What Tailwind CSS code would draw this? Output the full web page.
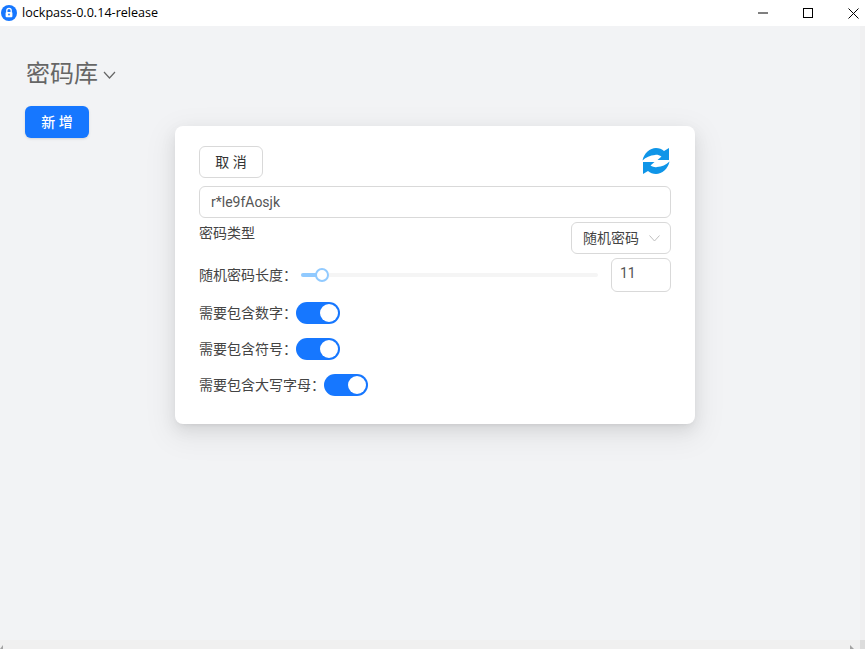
<!DOCTYPE html>
<html lang="zh-CN">
<head>
    <meta charset="UTF-8">
    <title>lockpass</title>
    <script src="https://cdn.jsdelivr.net/npm/@tailwindcss/browser@4"></script>
</head>
<body class="w-[865px] h-[649px] overflow-hidden bg-[#f2f3f5] font-['Roboto','Noto_Sans_CJK_SC',sans-serif] text-[#444]">
    <div class="relative flex flex-col h-[649px]">
        <!-- title bar -->
        <div class="flex items-center justify-between h-[26px] bg-white shrink-0">
            <div class="flex items-center">
                <svg class="ml-[1px] w-4 h-4" viewBox="0 0 16 16">
                    <circle cx="8" cy="8" r="8" fill="#1677ff"/>
                    <path d="M5.8 7V5.6a2.2 2.2 0 0 1 4.4 0V7" fill="none" stroke="#fff" stroke-width="1.3"/>
                    <rect x="4.6" y="7" width="6.8" height="5.2" rx="1" fill="#fff"/>
                    <circle cx="8" cy="9.5" r="0.9" fill="#1677ff"/>
                </svg>
                <span class="ml-[5px] text-[12.6px] text-black font-['Open_Sans',sans-serif]">lockpass-0.0.14-release</span>
            </div>
            <div class="flex items-center gap-[35px] pr-[6px]">
                <svg class="w-[10px] h-[10px]" viewBox="0 0 10 10"><path d="M0 5H10" stroke="#000"/></svg>
                <svg class="w-[10px] h-[10px]" viewBox="0 0 10 10"><rect x="0.5" y="0.5" width="9" height="9" fill="none" stroke="#000"/></svg>
                <svg class="w-[11px] h-[11px]" viewBox="0 0 11 11"><path d="M0.5 0.5L10.5 10.5M10.5 0.5L0.5 10.5" stroke="#000"/></svg>
            </div>
        </div>

        <!-- page -->
        <div class="flex flex-1">
            <div class="flex-1 pl-[25px] pt-[30px]">
                <div class="flex items-center h-[36px]">
                    <h1 class="ml-[1px] text-[24px] leading-[36px] font-normal text-[#666] font-['Liberation_Serif','Noto_Sans_CJK_SC',serif]">密码库</h1>
                    <svg class="ml-[5px] mt-[2px] w-[13px] h-[8px]" viewBox="0 0 13 8"><path d="M1 1L6.5 7L12 1" fill="none" stroke="#666" stroke-width="1.2"/></svg>
                </div>
                <button class="mt-[14px] w-[64px] h-[32px] rounded-[6px] bg-[#1677ff] text-white text-[14px] font-medium shadow-sm">新 增</button>
            </div>
            <div class="w-[5px] bg-[#f0f0f1]"></div>
        </div>

        <!-- bottom scrollbar -->
        <div class="flex h-[9px] shrink-0 bg-[#f0f0f0]">
            <svg class="w-[4px] h-[9px]" viewBox="0 0 4 9"><path d="M0 9L3 5V9Z" fill="#a3a3a3"/></svg>
            <div class="flex-1"></div>
            <svg class="w-[4px] h-[9px]" viewBox="0 0 4 9"><path d="M0 5L4 9H0Z" fill="#a3a3a3"/></svg>
            <div class="w-[6px]"></div>
            <div class="w-[5px] bg-[#dcdcdc]"></div>
        </div>

        <!-- modal -->
        <div class="absolute left-[175px] top-[126px] w-[520px] h-[298px] bg-white rounded-[8px] shadow-[0_6px_16px_0_rgba(0,0,0,0.08),0_3px_6px_-4px_rgba(0,0,0,0.12),0_9px_28px_8px_rgba(0,0,0,0.05)] px-[24px] pt-[20px]">
            <div class="flex items-center justify-between h-[32px]">
                <button class="w-[64px] h-[32px] rounded-[6px] border border-[#d9d9d9] bg-white text-[14px] text-[#333]">取 消</button>
                <svg class="w-[28px] h-[28px] mb-[3px] mr-[1px]" viewBox="0 0 28 28">
                    <path fill="#0f95e8" d="M0.5 13.5C2 6 8 1 14 1C17 1 20 2 22 4L27 1V13H15.5L19.5 9.5C17 8 15 7.5 13 8C8 8.5 4 10 0.5 13.5Z"/>
                    <path fill="#0f95e8" d="M27.5 14.5C26 22 20 27 14 27C11 27 8 26 6 24L1 27V15H12.5L8.5 18.5C11 20 13 20.5 15 20C20 19.5 24 18 27.5 14.5Z"/>
                </svg>
            </div>
            <input class="block mt-[8px] w-full h-[32px] rounded-[6px] border border-[#d9d9d9] px-[11px] text-[14px] text-[#555] outline-none" value="r*le9fAosjk">
            <div class="flex justify-between mt-[4px]">
                <span class="text-[14px] leading-[22px]">密码类型</span>
                <div class="flex items-center justify-between w-[100px] h-[32px] rounded-[6px] border border-[#d9d9d9] pl-[11px] pr-[10px]">
                    <span class="text-[14px]">随机密码</span>
                    <svg class="w-[11px] h-[7px]" viewBox="0 0 11 7"><path d="M0.5 0.5L5.5 6L10.5 0.5" fill="none" stroke="#bfbfbf"/></svg>
                </div>
            </div>
            <div class="flex items-center mt-[4px] h-[34px]">
                <span class="text-[14px] w-[102px] shrink-0 whitespace-nowrap">随机密码长度：</span>
                <div class="relative w-[297px] h-[4px] rounded-full bg-[#f5f5f5]">
                    <div class="w-[21px] h-[4px] rounded-full bg-[#91caff]"></div>
                    <div class="absolute left-[14px] top-[-5px] w-[14px] h-[14px] rounded-full bg-white border-2 border-[#91caff]"></div>
                </div>
                <div class="ml-auto flex items-center w-[60px] h-[34px] rounded-[6px] border border-[#d9d9d9] pl-[8px] pb-[3px] text-[14px] text-[#555]">11</div>
            </div>
            <div class="flex flex-col gap-[14px] mt-[10px]">
                <div class="flex items-center h-[22px]">
                    <span class="text-[14px] w-[97px] shrink-0 whitespace-nowrap">需要包含数字：</span>
                    <div class="flex justify-end items-center w-[44px] h-[22px] rounded-full bg-[#1677ff] pr-[2px]"><div class="w-[18px] h-[18px] rounded-full bg-white"></div></div>
                </div>
                <div class="flex items-center h-[22px]">
                    <span class="text-[14px] w-[97px] shrink-0 whitespace-nowrap">需要包含符号：</span>
                    <div class="flex justify-end items-center w-[44px] h-[22px] rounded-full bg-[#1677ff] pr-[2px]"><div class="w-[18px] h-[18px] rounded-full bg-white"></div></div>
                </div>
                <div class="flex items-center h-[22px]">
                    <span class="text-[14px] w-[125px] shrink-0 whitespace-nowrap">需要包含大写字母：</span>
                    <div class="flex justify-end items-center w-[44px] h-[22px] rounded-full bg-[#1677ff] pr-[2px]"><div class="w-[18px] h-[18px] rounded-full bg-white"></div></div>
                </div>
            </div>
        </div>
    </div>
</body>
</html>
